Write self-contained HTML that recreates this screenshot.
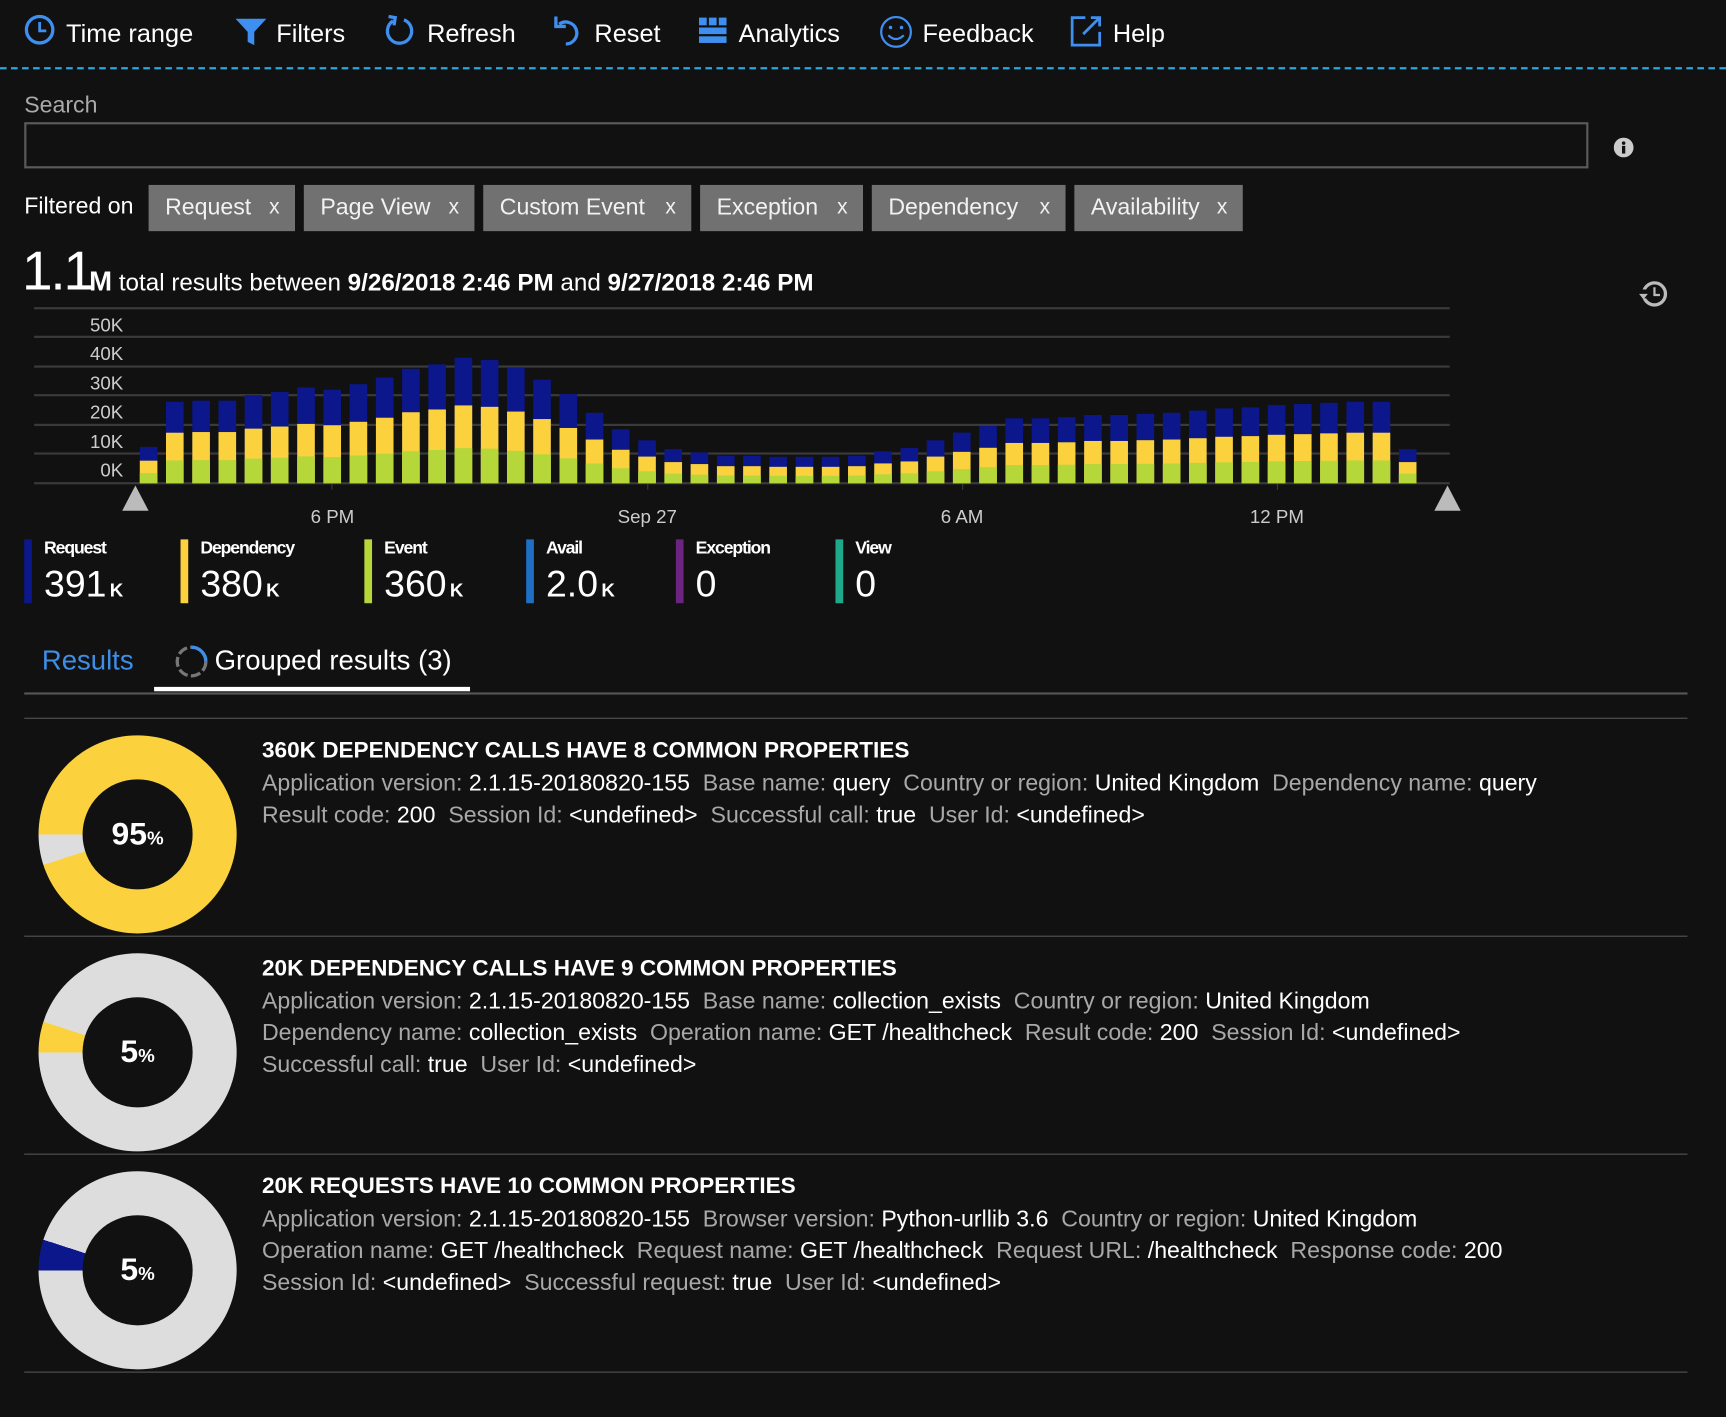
<!DOCTYPE html>
<html><head><meta charset="utf-8"><style>
html,body{margin:0;padding:0;background:#111;width:1726px;height:1416px;overflow:hidden}
#w{position:absolute;left:0;top:0;width:1568px;height:1287px;transform:scale(1.10077);transform-origin:0 0;font-family:"Liberation Sans",sans-serif;color:#fff}
.a{position:absolute;white-space:nowrap}
.tb{font-size:23px;top:17px;color:#fff}
.tb svg{position:absolute;left:0;top:-4px}
.tag{position:absolute;top:168px;height:42px;background:#717171;color:#f2f2f2;font-size:21px;line-height:42px;padding-left:15px;box-sizing:border-box}
.tag b{position:absolute;right:14px;font-weight:normal;font-size:19px}
.lg{position:absolute;top:490px;height:58px;border-left:7px solid}
.lg .t{position:absolute;left:11px;top:0;font-size:16px;font-weight:bold;letter-spacing:-1px}
.lg .v{position:absolute;left:11px;top:22px;font-size:34px}
.lg .v small{font-size:17px;font-weight:bold;margin-left:3px}
.hr{position:absolute;left:22px;width:1511px;height:1px;background:#555}
.donut{position:absolute;left:35px;width:180px;height:180px;border-radius:50%}
.donut i{position:absolute;left:40px;top:40px;width:100px;height:100px;border-radius:50%;background:#111;font-style:normal;text-align:center;line-height:100px;font-size:29px;font-weight:bold}
.donut i small{font-size:17px}
.ct{position:absolute;left:238px;font-size:20.5px;font-weight:bold}
.cp{position:absolute;left:238px;font-size:21px;color:#fff;line-height:29px;width:1290px}
.cp span{color:#a8a8a8}
</style></head><body><div id="w">
<div class="a tb" style="left:22px"><svg width="30" height="30" viewBox="0 0 30 30"><circle cx="14" cy="14" r="12" fill="none" stroke="#3f8ff0" stroke-width="3"/><path d="M14 7v8h6" fill="none" stroke="#3f8ff0" stroke-width="2.5"/></svg><span style="margin-left:38px">Time range</span></div>
<div class="a tb" style="left:213px"><svg width="30" height="30" viewBox="0 0 30 30"><path d="M1 4h28L18 16v12l-6-3V16z" fill="#3f8ff0"/></svg><span style="margin-left:38px">Filters</span></div>
<div class="a tb" style="left:348px"><svg width="30" height="30" viewBox="0 0 30 30"><path d="M9 6A11 11 0 1 0 19 5" fill="none" stroke="#3f8ff0" stroke-width="3"/><path d="M5 2l6 1-1 7" fill="none" stroke="#3f8ff0" stroke-width="3"/></svg><span style="margin-left:40px">Refresh</span></div>
<div class="a tb" style="left:502px"><svg width="30" height="30" viewBox="0 0 30 30"><path d="M6 9A10 10 0 1 1 12 27" fill="none" stroke="#3f8ff0" stroke-width="3"/><path d="M3 2v9h9" fill="none" stroke="#3f8ff0" stroke-width="3"/></svg><span style="margin-left:38px">Reset</span></div>
<div class="a tb" style="left:634px"><svg width="30" height="30" viewBox="0 0 30 30"><rect x="1" y="3" width="7" height="7" fill="#3f8ff0"/><rect x="10" y="3" width="7" height="7" fill="#3f8ff0"/><rect x="19" y="3" width="7" height="7" fill="#3f8ff0"/><rect x="1" y="12" width="25" height="6" fill="#3f8ff0"/><rect x="1" y="20" width="25" height="6" fill="#3f8ff0"/></svg><span style="margin-left:37px">Analytics</span></div>
<div class="a tb" style="left:798px"><svg width="32" height="32" viewBox="0 0 32 32"><circle cx="16" cy="16" r="13.5" fill="none" stroke="#3f8ff0" stroke-width="2"/><circle cx="11" cy="12" r="1.6" fill="#3f8ff0"/><circle cx="21" cy="12" r="1.6" fill="#3f8ff0"/><path d="M9 19q7 7 14 0" fill="none" stroke="#3f8ff0" stroke-width="2"/></svg><span style="margin-left:40px">Feedback</span></div>
<div class="a tb" style="left:972px"><svg width="30" height="30" viewBox="0 0 30 30"><path d="M14 3H2v25h25V16" fill="none" stroke="#3f8ff0" stroke-width="2.5"/><path d="M12 18L27 3M19 3h8v8" fill="none" stroke="#3f8ff0" stroke-width="2.5"/></svg><span style="margin-left:39px">Help</span></div>
<div class="a" style="left:0;top:61px;width:1568px;border-top:2px dashed #2aa7dc"></div>
<div class="a" style="left:22px;top:84px;font-size:21px;color:#aaa">Search</div>
<div class="a" style="left:22px;top:111px;width:1417px;height:38px;border:2px solid #5a5a5a"></div>
<svg class="a" style="left:1466px;top:125px" width="18" height="18" viewBox="0 0 18 18"><circle cx="9" cy="9" r="9" fill="#ccc"/><circle cx="9" cy="5" r="1.6" fill="#111"/><rect x="7.5" y="7.5" width="3" height="7" fill="#111"/></svg>
<div class="a" style="left:22px;top:176px;font-size:21px">Filtered on</div>
<div class="tag" style="left:135px;width:133px">Request<b>x</b></div>
<div class="tag" style="left:276px;width:155px">Page View<b>x</b></div>
<div class="tag" style="left:439px;width:189px">Custom Event<b>x</b></div>
<div class="tag" style="left:636px;width:148px">Exception<b>x</b></div>
<div class="tag" style="left:792px;width:176px">Dependency<b>x</b></div>
<div class="tag" style="left:976px;width:153px">Availability<b>x</b></div>
<div class="a" style="left:20px;top:217px;font-size:50px;letter-spacing:-2px">1.1</div>
<div class="a" style="left:81px;top:242px;font-size:22px"><b style="font-size:25px">M</b> total results between <b>9/26/2018 2:46 PM</b> and <b>9/27/2018 2:46 PM</b></div>
<svg class="a" style="left:1487px;top:253px" width="30" height="28" viewBox="0 0 30 28"><circle cx="16" cy="14" r="10" fill="none" stroke="#bbb" stroke-width="3"/><path d="M16 8v7h5" fill="none" stroke="#bbb" stroke-width="2"/><rect x="3" y="10" width="6" height="8" fill="#111"/><path d="M2 14l4 5 4-5z" fill="#bbb"/></svg>
<svg class="a" style="left:0;top:270px" width="1568" height="210" id="ch">
<g fill="#3a3a3a"><rect x="31" y="9" width="1286" height="2"/><rect x="31" y="35" width="1286" height="2"/><rect x="31" y="62" width="1286" height="2"/><rect x="31" y="88" width="1286" height="2"/><rect x="31" y="115" width="1286" height="2"/><rect x="31" y="141" width="1286" height="2"/><rect x="31" y="168" width="1286" height="2"/><rect x="301" y="169" width="1" height="6"/><rect x="588" y="169" width="1" height="6"/><rect x="874" y="169" width="1" height="6"/><rect x="1160" y="169" width="1" height="6"/></g>
<g fill="#ccc" font-size="17" font-family="Liberation Sans" text-anchor="end"><text x="112" y="31">50K</text><text x="112" y="57">40K</text><text x="112" y="84">30K</text><text x="112" y="110">20K</text><text x="112" y="137">10K</text><text x="112" y="163">0K</text></g>
<g id="bars"></g>
<path d="M123 171l12 23h-24z" fill="#bbb"/><path d="M1315 171l12 23h-24z" fill="#bbb"/>
<g fill="#ccc" font-size="17" font-family="Liberation Sans" text-anchor="middle"><text x="302" y="205">6 PM</text><text x="588" y="205">Sep 27</text><text x="874" y="205">6 AM</text><text x="1160" y="205">12 PM</text></g>
</svg>
<script>
var tops=[406,365,364,364,359,356,352,354,349,343,335,331,325,327,334,345,358,375,390,400,408,411,414,414,415,415,415,414,410,407,400,393,387,380,380,379,377,377,376,375,373,371,370,368,367,366,365,365,408];
var s='';for(var i=0;i<tops.length;i++){var x=127+i*23.83,h=439-tops[i],b=169;var g=h*0.28,y=h*0.34;
s+='<rect x="'+x.toFixed(1)+'" y="'+(b-h)+'" width="16" height="'+h+'" fill="#0c178c"/>';
s+='<rect x="'+x.toFixed(1)+'" y="'+(b-g-y).toFixed(1)+'" width="16" height="'+(g+y).toFixed(1)+'" fill="#fbd23d"/>';
s+='<rect x="'+x.toFixed(1)+'" y="'+(b-g).toFixed(1)+'" width="16" height="'+g.toFixed(1)+'" fill="#b6d73a"/>';}
document.getElementById('bars').innerHTML=s;
</script>
<div class="lg" style="left:22px;border-color:#0c178c"><div class="t">Request</div><div class="v">391<small>K</small></div></div>
<div class="lg" style="left:164px;border-color:#fbd23d"><div class="t">Dependency</div><div class="v">380<small>K</small></div></div>
<div class="lg" style="left:331px;border-color:#b6d73a"><div class="t">Event</div><div class="v">360<small>K</small></div></div>
<div class="lg" style="left:478px;border-color:#1f6fc4"><div class="t">Avail</div><div class="v">2.0<small>K</small></div></div>
<div class="lg" style="left:614px;border-color:#6b2580"><div class="t">Exception</div><div class="v">0</div></div>
<div class="lg" style="left:759px;border-color:#1eaa8a"><div class="t">View</div><div class="v">0</div></div>
<div class="a" style="left:38px;top:586px;font-size:25px;color:#3e8ee8">Results</div>
<svg class="a" style="left:158px;top:585px" width="32" height="32" viewBox="0 0 32 32"><circle cx="16" cy="16" r="13" fill="none" stroke="#777" stroke-width="3" stroke-dasharray="9 3"/><path d="M16 3a13 13 0 0 1 13 13" fill="none" stroke="#3e8ee8" stroke-width="3"/></svg>
<div class="a" style="left:195px;top:586px;font-size:25px">Grouped results (3)</div>
<div class="a" style="left:140px;top:624px;width:287px;height:4px;background:#fff"></div>
<div class="hr" style="top:629px;height:2px;background:#555"></div>
<div class="hr" style="top:652px"></div>
<div class="hr" style="top:850px"></div>
<div class="hr" style="top:1048px"></div>
<div class="hr" style="top:1246px"></div>
<div class="donut" style="top:668px;background:conic-gradient(from 270deg,#fbd23d 0 95%,#ddd 95% 100%)"><i>95<small>%</small></i></div>
<div class="ct" style="top:670px">360K DEPENDENCY CALLS HAVE 8 COMMON PROPERTIES</div>
<div class="cp" style="top:697px"><span>Application version:</span> 2.1.15-20180820-155 &nbsp;<span>Base name:</span> query &nbsp;<span>Country or region:</span> United Kingdom &nbsp;<span>Dependency name:</span> query<br><span>Result code:</span> 200 &nbsp;<span>Session Id:</span> &lt;undefined&gt; &nbsp;<span>Successful call:</span> true &nbsp;<span>User Id:</span> &lt;undefined&gt;</div>
<div class="donut" style="top:866px;background:conic-gradient(from 270deg,#fbd23d 0 5%,#ddd 5% 100%)"><i>5<small>%</small></i></div>
<div class="ct" style="top:868px">20K DEPENDENCY CALLS HAVE 9 COMMON PROPERTIES</div>
<div class="cp" style="top:895px"><span>Application version:</span> 2.1.15-20180820-155 &nbsp;<span>Base name:</span> collection_exists &nbsp;<span>Country or region:</span> United Kingdom<br><span>Dependency name:</span> collection_exists &nbsp;<span>Operation name:</span> GET /healthcheck &nbsp;<span>Result code:</span> 200 &nbsp;<span>Session Id:</span> &lt;undefined&gt;<br><span>Successful call:</span> true &nbsp;<span>User Id:</span> &lt;undefined&gt;</div>
<div class="donut" style="top:1064px;background:conic-gradient(from 270deg,#0c178c 0 5%,#ddd 5% 100%)"><i>5<small>%</small></i></div>
<div class="ct" style="top:1066px">20K REQUESTS HAVE 10 COMMON PROPERTIES</div>
<div class="cp" style="top:1093px"><span>Application version:</span> 2.1.15-20180820-155 &nbsp;<span>Browser version:</span> Python-urllib 3.6 &nbsp;<span>Country or region:</span> United Kingdom<br><span>Operation name:</span> GET /healthcheck &nbsp;<span>Request name:</span> GET /healthcheck &nbsp;<span>Request URL:</span> /healthcheck &nbsp;<span>Response code:</span> 200<br><span>Session Id:</span> &lt;undefined&gt; &nbsp;<span>Successful request:</span> true &nbsp;<span>User Id:</span> &lt;undefined&gt;</div>
</div></body></html>
